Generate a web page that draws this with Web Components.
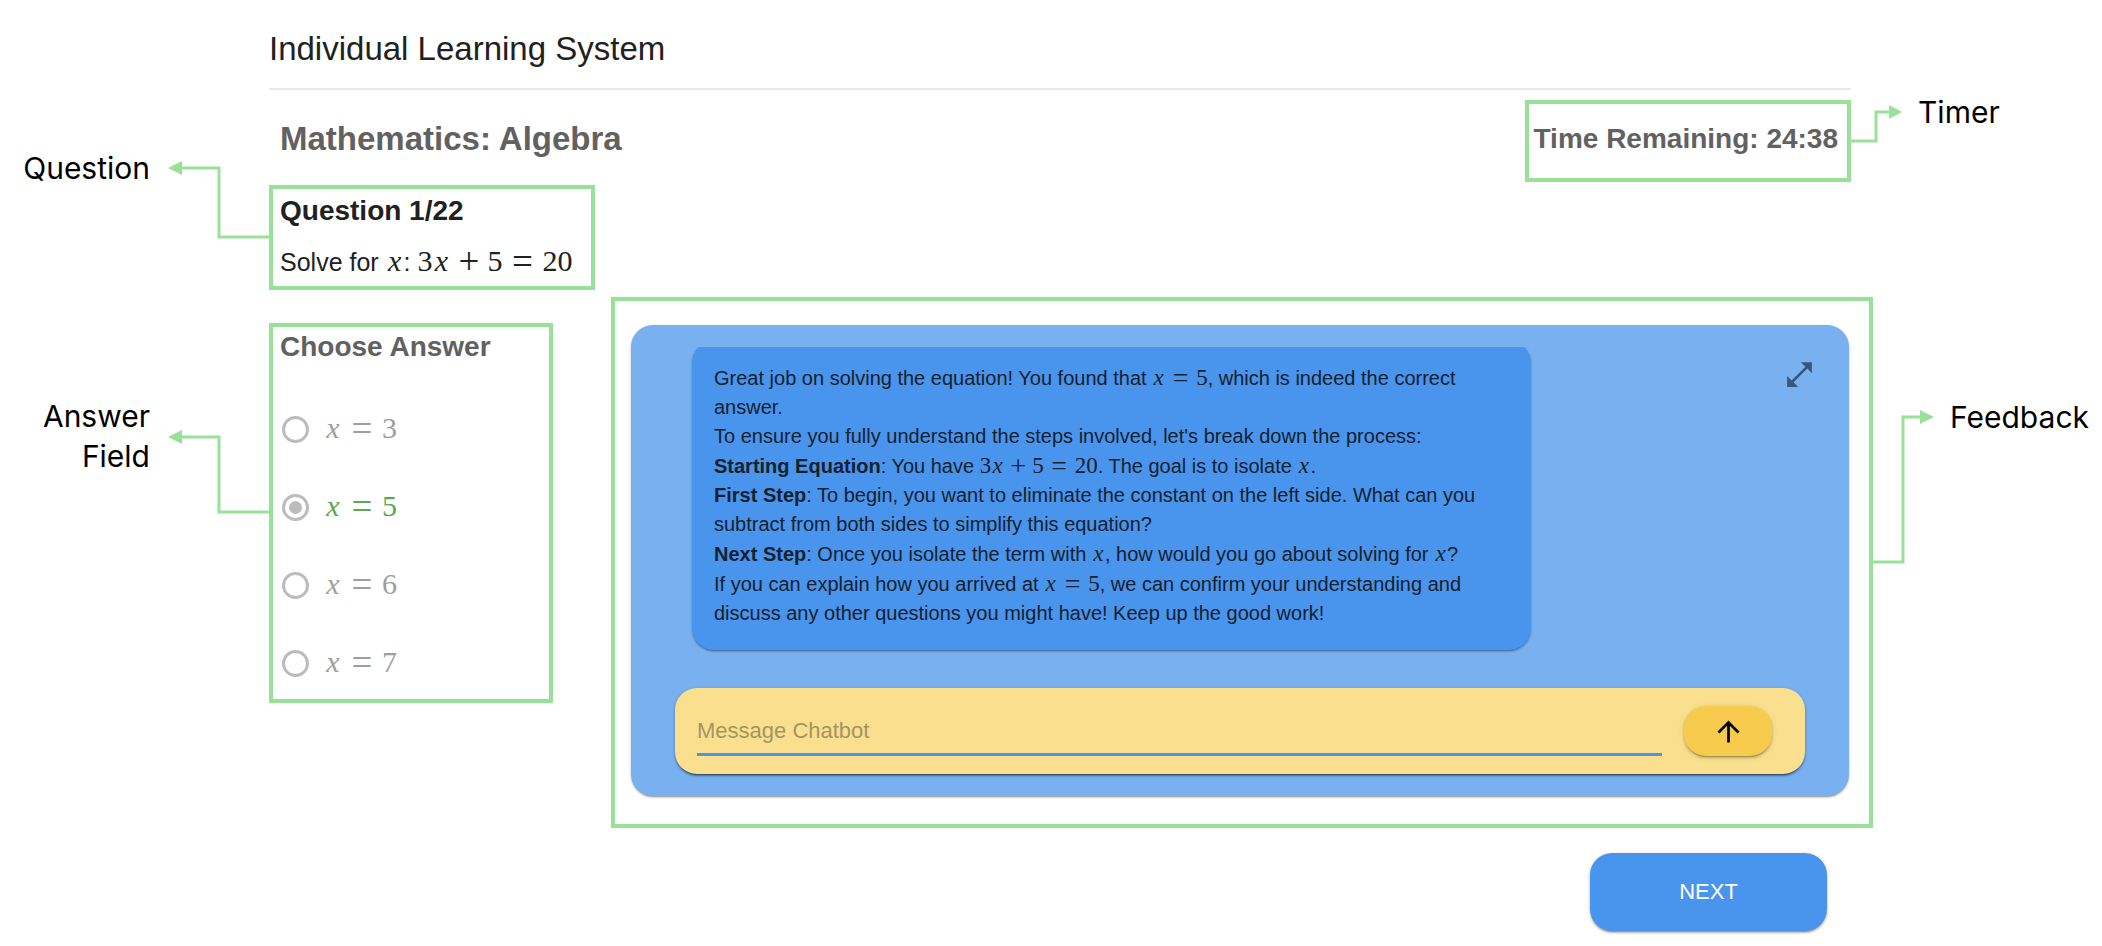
<!DOCTYPE html>
<html lang="en">
<head>
<meta charset="utf-8">
<meta name="viewport" content="width=device-width, initial-scale=1">
<title>Individual Learning System</title>
<style>
  body { margin: 0; background: #fff; color: #212121; font-family: "Liberation Sans", Arial, sans-serif; }
</style>
</head>
<body>
<learning-page></learning-page>

<script>
const define = (name, html, setup) => {
  const template = document.createElement('template');
  template.innerHTML = html;
  customElements.define(name, class extends HTMLElement {
    constructor() {
      super();
      this.attachShadow({ mode: 'open' }).append(template.content.cloneNode(true));
    }
    connectedCallback() { if (setup) setup(this, this.shadowRoot); }
  });
};

/* Inline formula: <math-expr value="3x+5=20"> */
define('math-expr', `
  <style>
    :host { display: inline; font-family: "Liberation Serif", "Times New Roman", serif; font-size: var(--math-size, 30px); }
    span { white-space: nowrap; }
    i, b { display: inline-block; text-align: center; font-weight: inherit; }
    i { width: var(--math-var, 18px); }
    b { font-size: var(--math-op, 37px); line-height: 20px; vertical-align: var(--math-drop, -3px); }
    .bin { width: var(--math-bin, 37px); }
    .rel { width: var(--math-rel, 40px); }
  </style>
  <span></span>`, (host, root) => {
  root.querySelector('span').innerHTML = host.getAttribute('value')
    .replace(/[a-z]|\+|=/g, c => c === '+' ? '<b class="bin">+</b>' : c === '=' ? '<b class="rel">=</b>' : `<i>${c}</i>`);
});

/* Green outline round a region of the screen */
define('region-frame', `
  <style>
    :host { display: block; box-sizing: border-box; border: 4px solid #99e199; }
  </style>
  <slot></slot>`);

/* Label with an elbow arrow: the arrow is slotted, side="left|right" sets the order */
define('region-callout', `
  <style>
    :host { display: flex; align-items: flex-start; gap: 18px; justify-content: flex-end; text-align: right;
            font: 30px/40px Inter, sans-serif; color: #000; }
    :host([side="right"]) { flex-direction: row-reverse; gap: 16px; text-align: left; }
    ::slotted(svg) { display: block; flex: none; fill: none; stroke: #99e199; stroke-width: 3; }
  </style>
  <div><slot></slot></div>
  <slot name="arrow"></slot>`);

define('page-title', `
  <style>
    :host { display: block; padding: 29px 0 19px; border-bottom: 2px solid #e8e8eb; }
    h1 { margin: 0; font-size: 33px; line-height: 40px; font-weight: 400; }
  </style>
  <h1><slot></slot></h1>`);

define('count-down', `
  <style>
    :host { display: block; padding: 19px 9px 23px 5px; font-weight: 700; font-size: 28px; line-height: 32px; color: #616161; }
  </style>
  <span role="timer"><slot></slot></span>`);

define('question-card', `
  <style>
    :host { display: block; padding: 6px 7px 6px; }
    h3 { margin: 0 0 16px; font-size: 28px; line-height: 32px; }
    p { margin: 0; font-size: 25px; line-height: 36px; }
  </style>
  <h3><slot name="heading"></slot></h3>
  <p><slot></slot></p>`);

define('answer-list', `
  <style>
    :host { display: block; padding: 4px 7px 13px; }
    fieldset { display: flex; flex-direction: column; gap: 32px; margin: 0; padding: 0; border: 0; min-width: 0; }
    legend { float: left; padding: 0; margin-bottom: 11px; font-weight: 700; font-size: 28px; line-height: 32px; color: #616161; }
    label { display: flex; align-items: center; gap: 15px; height: 46px; padding-left: 2px; color: #9e9e9e; }
    label:has(:checked) { color: #5aa850; }
    math-expr { padding-bottom: 3px; }
    input { appearance: none; flex: none; display: grid; place-items: center; box-sizing: border-box;
            width: 27px; height: 27px; margin: 0; border: 3px solid #bcbcbc; border-radius: 50%; }
    input:checked::before { content: ""; width: 13px; height: 13px; border-radius: 50%; background: #bcbcbc; }
  </style>
  <fieldset>
    <legend>Choose Answer</legend>
    <label><input type="radio" name="answer" value="3"><math-expr value="x=3"></math-expr></label>
    <label><input type="radio" name="answer" value="5" checked><math-expr value="x=5"></math-expr></label>
    <label><input type="radio" name="answer" value="6"><math-expr value="x=6"></math-expr></label>
    <label><input type="radio" name="answer" value="7"><math-expr value="x=7"></math-expr></label>
  </fieldset>`);

define('chat-bubble', `
  <style>
    :host { display: block; box-sizing: border-box; max-width: 839px; padding: 22px; border-radius: 22px;
            background: #4994ec; color: #14212e; font-size: 20px; line-height: 29px;
            box-shadow: 0 2px 2px -1px rgba(0,0,0,.3), 0 1px 3px rgba(0,0,0,.22);
            --math-size: 23px; --math-op: 28px; --math-drop: -2px; --math-var: 13px; --math-bin: 28px; --math-rel: 31px; }
    ::slotted(p) { margin: 0; }
  </style>
  <slot></slot>`);

define('message-bar', `
  <style>
    :host { display: block; }
    form { display: flex; gap: 22px; margin: 0; padding: 18px 33px 18px 22px; border-radius: 22px; background: #fae08e;
           box-shadow: 0 3px 1px -2px rgba(0,0,0,.3), 0 2px 2px rgba(0,0,0,.3), 0 1px 4px rgba(0,0,0,.14); }
    input { flex: 1; min-width: 0; box-sizing: border-box; height: 50px; padding: 2px 0 0; border: 0; border-bottom: 3px solid #4994ec;
            background: none; font: 22px "Liberation Sans", Arial, sans-serif; color: #212121; outline: 0; }
    input::placeholder { color: #a4955f; opacity: 1; }
    button { flex: none; display: grid; place-items: center; width: 88px; height: 50px; padding: 0; border: 0; border-radius: 22px;
             background: #f7cb4d; color: #000;
             box-shadow: 0 2px 1px -1px rgba(0,0,0,.2), 0 2px 3px rgba(0,0,0,.18), 0 1px 6px rgba(0,0,0,.12); }
    svg { display: block; width: 33px; height: 33px; }
  </style>
  <form>
    <input type="text" placeholder="Message Chatbot" aria-label="Message Chatbot">
    <button type="button" aria-label="Send">
      <svg viewBox="0 0 24 24" fill="currentColor"><path d="m4 12 1.41 1.41L11 7.83V20h2V7.83l5.58 5.59L20 12l-8-8-8 8z"/></svg>
    </button>
  </form>`);

define('chat-panel', `
  <style>
    :host { display: block; padding: 22px 0; border-radius: 22px; background: #78b0f0;
            box-shadow: 0 2px 2px -1px rgba(0,0,0,.3), 0 1px 3px rgba(0,0,0,.22); }
    .top { display: flex; align-items: flex-start; padding: 0 22px 0 44px; }
    /* The log is scrolled a little, so the bubble's top edge is cut off */
    .log { flex: 1; min-width: 0; overflow: hidden; padding: 0 17px 38px; }
    ::slotted(chat-bubble) { margin-top: -6px; }
    button { flex: none; padding: 11px; border: 0; background: none; color: #375878; }
    svg { display: block; width: 33px; height: 33px; }
    message-bar { margin: 0 44px; }
  </style>
  <div class="top">
    <div class="log"><slot></slot></div>
    <button type="button" aria-label="Expand">
      <svg viewBox="0 0 24 24" fill="currentColor"><path d="M21 11V3h-8l3.29 3.29-10 10L3 13v8h8l-3.29-3.29 10-10z"/></svg>
    </button>
  </div>
  <message-bar></message-bar>`);

define('next-button', `
  <style>
    :host { display: block; }
    button { display: block; min-width: 237px; padding: 24px 22px; border: 0; border-radius: 22px; background: #4994ec; color: #fff;
             font: 22px/30px "Liberation Sans", Arial, sans-serif; text-transform: uppercase;
             box-shadow: 0 3px 1px -2px rgba(0,0,0,.2), 0 2px 2px rgba(0,0,0,.2), 0 1px 5px rgba(0,0,0,.14); }
  </style>
  <button type="button"><slot></slot></button>`);

define('learning-page', `
  <style>
    :host { display: grid; grid-template-columns: 269px minmax(0, 1fr) 251px; align-items: start; padding-bottom: 15px; }
    .left { padding-top: 148px; display: flex; flex-direction: column; gap: 156px; }
    .left svg { margin-top: 12px; }
    .left .two-line svg { margin-top: 33px; }
    .right { padding-top: 92px; display: flex; flex-direction: column; gap: 253px; }
    .right svg { margin-top: 12px; }
    .right .outer { padding-left: 22px; }
    .arrowhead { fill: #99e199; stroke: none; }
    .subject { display: flex; justify-content: space-between; align-items: flex-start; margin: 10px 0 3px; }
    h2 { margin: 0; padding: 19px 11px 0; font-size: 33px; line-height: 40px; color: #616161; }
    .question { width: 326px; }
    .work { display: flex; align-items: flex-start; gap: 58px; margin-top: 7px; }
    .answers { flex: none; width: 284px; margin-top: 26px; }
    .feedback { flex: 1; min-width: 0; margin-right: -22px; padding: 24px 20px 28px 16px; }
    .actions { display: flex; justify-content: flex-end; margin-top: 25px; padding-right: 24px; }
  </style>

  <aside class="left">
    <region-callout>Question
      <svg slot="arrow" width="101" height="80"><path d="M12 8H51V77H101"/><path class="arrowhead" d="M0 8 14 1V15z"/></svg>
    </region-callout>
    <region-callout class="two-line">Answer<br>Field
      <svg slot="arrow" width="101" height="86"><path d="M12 8H51V83H101"/><path class="arrowhead" d="M0 8 14 1V15z"/></svg>
    </region-callout>
  </aside>

  <main>
    <page-title>Individual Learning System</page-title>
    <div class="subject">
      <h2>Mathematics: Algebra</h2>
      <region-frame><count-down>Time Remaining: 24:38</count-down></region-frame>
    </div>
    <region-frame class="question">
      <question-card>
        <span slot="heading">Question 1/22</span>
        Solve for <math-expr value="x"></math-expr>: <math-expr value="3x+5=20"></math-expr>
      </question-card>
    </region-frame>
    <div class="work">
      <region-frame class="answers"><answer-list></answer-list></region-frame>
      <region-frame class="feedback">
        <chat-panel>
          <chat-bubble>
            <p>Great job on solving the equation! You found that <math-expr value="x=5"></math-expr>, which is indeed the correct answer.</p>
            <p>To ensure you fully understand the steps involved, let's break down the process:</p>
            <p><strong>Starting Equation</strong>: You have <math-expr value="3x+5=20"></math-expr>. The goal is to isolate <math-expr value="x"></math-expr>.</p>
            <p><strong>First Step</strong>: To begin, you want to eliminate the constant on the left side. What can you subtract from both sides to simplify this equation?</p>
            <p><strong>Next Step</strong>: Once you isolate the term with <math-expr value="x"></math-expr>, how would you go about solving for <math-expr value="x"></math-expr>?</p>
            <p>If you can explain how you arrived at <math-expr value="x=5"></math-expr>, we can confirm your understanding and discuss any other questions you might have! Keep up the good work!</p>
          </chat-bubble>
        </chat-panel>
      </region-frame>
    </div>
    <div class="actions"><next-button>Next</next-button></div>
  </main>

  <aside class="right">
    <region-callout side="right">Timer
      <svg slot="arrow" width="51" height="40"><path d="M0 37H25V8H40"/><path class="arrowhead" d="M51 8 38 1V15z"/></svg>
    </region-callout>
    <region-callout side="right" class="outer">Feedback
      <svg slot="arrow" width="61" height="156"><path d="M0 153H30V8H48"/><path class="arrowhead" d="M61 8 47 1V15z"/></svg>
    </region-callout>
  </aside>`);
</script>
</body>
</html>
